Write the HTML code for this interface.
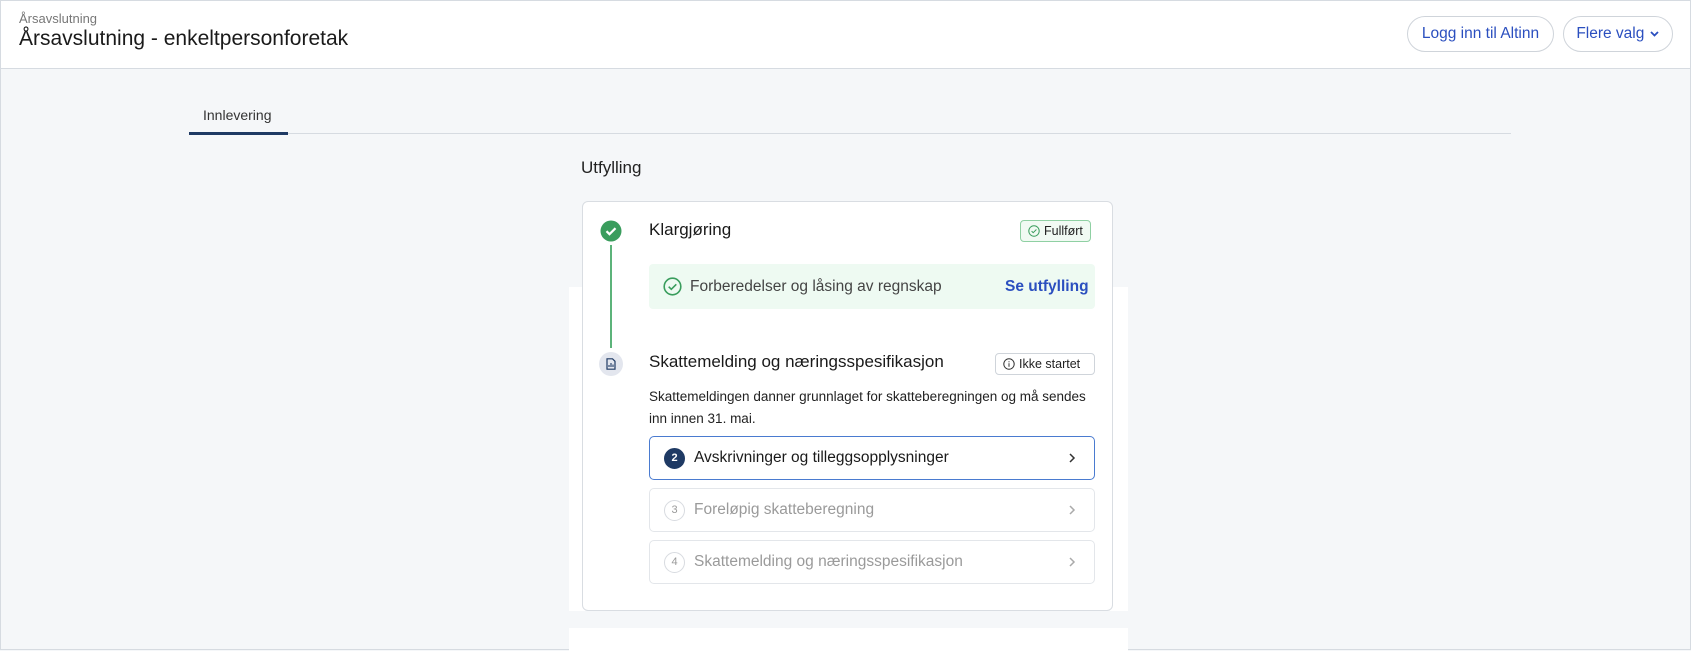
<!DOCTYPE html>
<html><head><meta charset="utf-8"><style>
*{box-sizing:border-box;margin:0;padding:0}
body{width:1691px;height:650px;overflow:hidden;background:#f5f7f9;font-family:"Liberation Sans",sans-serif;color:#1a1a1a;position:relative;border:1px solid #d6dbe1}
.a{position:absolute}
.hdr{left:0;top:0;width:1689px;height:68px;background:#fff;border-bottom:1px solid #d6dbe1}
.btn{top:15px;height:36px;border:1px solid #cfd4da;border-radius:18px;color:#2b4fbf;font-size:15.5px;display:flex;align-items:center;justify-content:center;background:#fff}
.card{left:581px;top:200px;width:531px;height:410px;background:#fff;border:1px solid #d9dde2;border-radius:6px}
.badge{height:22px;border-radius:4px;font-size:12.5px;display:flex;align-items:center;gap:4px;padding:0 7px}
.item{left:648px;width:446px;border:1px solid #e3e6ea;border-radius:5px;height:44px;display:flex;align-items:center;font-size:15.5px;color:#9a9a9a}
.num{width:21px;height:21px;border-radius:50%;border:1px solid #d8dbe0;font-size:11px;display:flex;align-items:center;justify-content:center;margin:0 9px 0 14px;color:#999}
.chev{position:absolute;right:18px;top:15px}
</style></head><body>
<div class="a hdr"></div>
<div class="a" style="left:18px;top:10px;font-size:13px;color:#777">Årsavslutning</div>
<div class="a" style="left:18px;top:26px;font-size:21px;color:#1a1a1a">Årsavslutning - enkeltpersonforetak</div>
<div class="a btn" style="left:1406px;width:147px">Logg inn til Altinn</div>
<div class="a btn" style="left:1562px;width:110px">Flere valg&nbsp;<svg width="11" height="8" viewBox="0 0 11 8"><path d="M2 2l3.5 3.5L9 2" stroke="#2b4fbf" stroke-width="1.8" fill="none"/></svg></div>

<div class="a" style="left:202px;top:106px;font-size:14px;color:#333">Innlevering</div>
<div class="a" style="left:188px;top:132px;width:1322px;height:1px;background:#d6dbe1"></div>
<div class="a" style="left:188px;top:131px;width:99px;height:3px;background:#1f3a64"></div>

<div class="a" style="left:580px;top:157px;font-size:17px;color:#222">Utfylling</div>

<div class="a" style="left:568px;top:286px;width:559px;height:364px;background:#fff"></div>
<div class="a" style="left:568px;top:610px;width:559px;height:17px;background:#f5f7f9"></div>
<div class="a card"></div>

<svg class="a" style="left:599px;top:219px" width="22" height="22" viewBox="0 0 22 22"><circle cx="11" cy="11" r="10.5" fill="#3a9d5d"/><path d="M6.5 11.2l3 3 6-6" stroke="#fff" stroke-width="2.2" fill="none"/></svg>
<div class="a" style="left:609px;top:244px;width:2px;height:103px;background:#5cb37a"></div>
<div class="a" style="left:648px;top:219px;font-size:17px">Klargjøring</div>
<div class="a badge" style="left:1019px;top:219px;border:1px solid #8fd0a3;background:#f1faf3;color:#222"><svg width="12" height="12" viewBox="0 0 12 12"><circle cx="6" cy="6" r="5.2" stroke="#3a9d5d" fill="none"/><path d="M3.6 6.1l1.6 1.6 3.2-3.2" stroke="#3a9d5d" fill="none"/></svg>Fullført</div>

<div class="a" style="left:648px;top:263px;width:446px;height:45px;background:#eefaf2;border-radius:4px"></div>
<svg class="a" style="left:662px;top:276px" width="19" height="19" viewBox="0 0 19 19"><circle cx="9.5" cy="9.5" r="8.3" stroke="#3a9d5d" stroke-width="1.6" fill="none"/><path d="M5.7 9.7l2.6 2.6 5-5" stroke="#3a9d5d" stroke-width="1.6" fill="none"/></svg>
<div class="a" style="left:689px;top:277px;font-size:15.5px;color:#444">Forberedelser og låsing av regnskap</div>
<div class="a" style="left:1004px;top:277px;font-size:15.5px;color:#2b4fbf;font-weight:bold">Se utfylling</div>

<div class="a" style="left:598px;top:351px;width:24px;height:24px;border-radius:50%;background:#e3e6ee"></div>
<svg class="a" style="left:605px;top:357px" width="10" height="12" viewBox="0 0 10 12"><path d="M1 .8h5.5L9 3.3v7.9H1z" stroke="#1f3a64" stroke-width="1.2" fill="none"/><path d="M3 9V7M5 9V5M7 9V6.5" stroke="#1f3a64" stroke-width="1.1"/></svg>
<div class="a" style="left:648px;top:351px;font-size:17px">Skattemelding og næringsspesifikasjon</div>
<div class="a badge" style="left:994px;top:352px;border:1px solid #cfd4da;color:#222;width:100px"><svg width="12" height="12" viewBox="0 0 12 12"><circle cx="6" cy="6" r="5.2" stroke="#333" fill="none"/><path d="M6 5.2v3.5M6 3.3v.9" stroke="#333"/></svg>Ikke startet</div>
<div class="a" style="left:648px;top:385px;font-size:13.5px;line-height:21.5px;color:#222;width:450px">Skattemeldingen danner grunnlaget for skatteberegningen og må sendes inn innen 31. mai.</div>

<div class="a item" style="top:435px;border-color:#4a7bd0;color:#1a1a1a"><div class="num" style="background:#1f3a64;border-color:#1f3a64;color:#fff;font-weight:bold">2</div>Avskrivninger og tilleggsopplysninger<svg class="chev" width="8" height="12" viewBox="0 0 8 12"><path d="M2 2l4 4-4 4" stroke="#333" stroke-width="1.5" fill="none"/></svg></div>
<div class="a item" style="top:487px"><div class="num">3</div>Foreløpig skatteberegning<svg class="chev" width="8" height="12" viewBox="0 0 8 12"><path d="M2 2l4 4-4 4" stroke="#aaa" stroke-width="1.5" fill="none"/></svg></div>
<div class="a item" style="top:539px"><div class="num">4</div>Skattemelding og næringsspesifikasjon<svg class="chev" width="8" height="12" viewBox="0 0 8 12"><path d="M2 2l4 4-4 4" stroke="#aaa" stroke-width="1.5" fill="none"/></svg></div>
</body></html>
